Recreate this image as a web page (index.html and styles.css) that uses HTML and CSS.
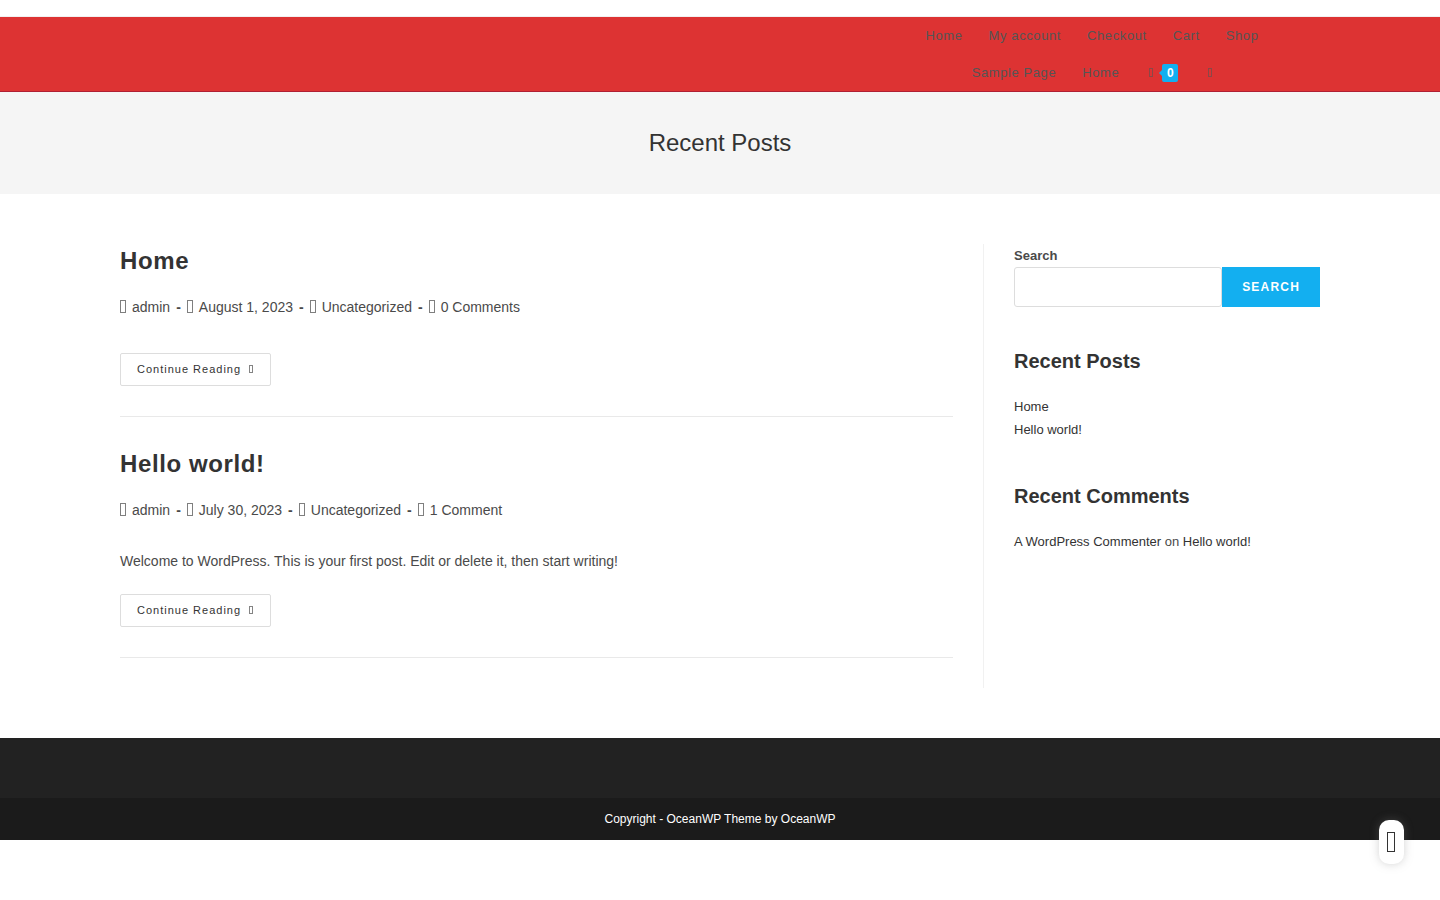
FILE: index.html
```html
<!DOCTYPE html>
<html lang="en">
<head>
<meta charset="utf-8">
<meta name="viewport" content="width=device-width, initial-scale=1">
<title>Recent Posts</title>
<link rel="stylesheet" href="styles.css">
</head>
<body>
<div class="top-bar"></div>
<header class="site-header">
  <div class="container header-inner">
    <nav class="main-nav" aria-label="Main">
      <ul class="menu">
        <li><a href="#">Home</a></li>
        <li><a href="#">My account</a></li>
        <li><a href="#">Checkout</a></li>
        <li><a href="#">Cart</a></li>
        <li><a href="#">Shop</a></li>
        <li><a href="#">Sample Page</a></li>
        <li><a href="#">Home</a></li>
        <li><a class="icon-link" href="#" aria-label="Cart items"><svg class="icon-nav" viewBox="0 0 4 9"><rect x=".5" y=".5" width="3" height="8"/></svg><span class="badge">0</span></a></li>
        <li><a class="icon-link" href="#" aria-label="Search website"><svg class="icon-nav" viewBox="0 0 4 9"><rect x=".5" y=".5" width="3" height="8"/></svg></a></li>
      </ul>
    </nav>
  </div>
</header>
<div class="page-header"><h1>Recent Posts</h1></div>
<div class="container content">
  <main class="primary">
    <article class="post">
      <h2><a href="#">Home</a></h2>
      <ul class="meta">
        <li><svg class="icon-meta" viewBox="0 0 6 13"><rect x=".5" y=".5" width="5" height="12"/></svg><a href="#">admin</a></li>
        <li><svg class="icon-meta" viewBox="0 0 6 13"><rect x=".5" y=".5" width="5" height="12"/></svg>August 1, 2023</li>
        <li><svg class="icon-meta" viewBox="0 0 6 13"><rect x=".5" y=".5" width="5" height="12"/></svg><a href="#">Uncategorized</a></li>
        <li><svg class="icon-meta" viewBox="0 0 6 13"><rect x=".5" y=".5" width="5" height="12"/></svg><a href="#">0 Comments</a></li>
      </ul>
      <a class="read-more" href="#">Continue Reading<svg class="icon-more" viewBox="0 0 4 8"><rect x=".5" y=".5" width="3" height="7"/></svg></a>
    </article>
    <article class="post">
      <h2><a href="#">Hello world!</a></h2>
      <ul class="meta">
        <li><svg class="icon-meta" viewBox="0 0 6 13"><rect x=".5" y=".5" width="5" height="12"/></svg><a href="#">admin</a></li>
        <li><svg class="icon-meta" viewBox="0 0 6 13"><rect x=".5" y=".5" width="5" height="12"/></svg>July 30, 2023</li>
        <li><svg class="icon-meta" viewBox="0 0 6 13"><rect x=".5" y=".5" width="5" height="12"/></svg><a href="#">Uncategorized</a></li>
        <li><svg class="icon-meta" viewBox="0 0 6 13"><rect x=".5" y=".5" width="5" height="12"/></svg><a href="#">1 Comment</a></li>
      </ul>
      <p class="excerpt">Welcome to WordPress. This is your first post. Edit or delete it, then start writing!</p>
      <a class="read-more" href="#">Continue Reading<svg class="icon-more" viewBox="0 0 4 8"><rect x=".5" y=".5" width="3" height="7"/></svg></a>
    </article>
  </main>
  <aside class="sidebar">
    <form class="widget search-form">
      <label for="search">Search</label>
      <div class="search-row">
        <input id="search" type="search">
        <button type="button">SEARCH</button>
      </div>
    </form>
    <section class="widget">
      <h2>Recent Posts</h2>
      <ul>
        <li><a href="#">Home</a></li>
        <li><a href="#">Hello world!</a></li>
      </ul>
    </section>
    <section class="widget">
      <h2>Recent Comments</h2>
      <ul>
        <li><a href="#">A WordPress Commenter</a> on <a href="#">Hello world!</a></li>
      </ul>
    </section>
  </aside>
</div>
<footer>
  <div class="footer-widgets"></div>
  <div class="copyright">Copyright - OceanWP Theme by OceanWP</div>
</footer>
<button class="float-button" type="button" aria-label="Open panel"><svg viewBox="0 0 8 20"><rect x=".5" y=".5" width="7" height="19"/></svg></button>
</body>
</html>
```
FILE: styles.css
```css
* { box-sizing: border-box; }
body {
  margin: 0;
  background: #fff;
  color: #4a4a4a;
  font: 14px/26px "Liberation Sans", Arial, sans-serif;
}
h1, h2, p, ul { margin: 0; padding: 0; }
ul { list-style: none; }
a { color: inherit; text-decoration: none; }
svg { fill: none; stroke: currentColor; flex: none; }
.container { width: 1200px; max-width: 90%; margin: 0 auto; }

.top-bar { height: 17px; border-bottom: 1px solid #f1f1f1; }
.site-header { background: #dd3333; border-bottom: 1px solid #b01f33; }
.header-inner { display: flex; justify-content: flex-end; }
.main-nav { width: 38%; }
.menu { display: flex; flex-wrap: wrap; justify-content: center; }
.menu a {
  display: flex;
  align-items: center;
  height: 37px;
  padding: 0 13px;
  color: #555;
  font-size: 13px;
  letter-spacing: 0.046em;
}
.icon-nav { width: 4px; height: 9px; opacity: 0.6; }
.menu .icon-link { padding-left: 17px; }
.badge {
  position: relative;
  width: 16px;
  margin-left: 9px;
  border-radius: 2px;
  background: #13aff0;
  color: #fff;
  font-size: 12px;
  font-weight: bold;
  line-height: 18px;
  letter-spacing: 0;
  text-align: center;
}
.badge::before {
  content: "";
  position: absolute;
  left: -3px;
  top: 6px;
  border: solid transparent;
  border-width: 3px 3px 3px 0;
  border-right-color: #13aff0;
}

.page-header { padding: 34px 0; background: #f5f5f5; text-align: center; }
.page-header h1 { color: #333; font-size: 24px; font-weight: normal; line-height: 34px; }

.content { display: flex; padding: 50px 0; }
.primary { width: 72%; padding-right: 30px; border-right: 1px solid #f1f1f1; }
.post { margin-bottom: 30px; padding-bottom: 30px; border-bottom: 1px solid #e9e9e9; }
.post h2 {
  margin-bottom: 16px;
  color: #333;
  font-size: 24px;
  line-height: 34px;
  letter-spacing: 0.025em;
}
.meta { display: flex; flex-wrap: wrap; margin-bottom: 33px; }
.meta li { display: flex; align-items: center; }
.meta li + li::before { content: "-"; margin: 0 6px; font-weight: bold; }
.icon-meta { width: 6px; height: 13px; margin: 0 6px 2px 0; opacity: 0.7; }
.excerpt { margin: -8px 0 20px; }
.read-more {
  display: inline-flex;
  align-items: center;
  height: 33px;
  padding: 0 17px 2px 16px;
  border: 1px solid #ddd;
  border-radius: 2px;
  color: #333;
  font-size: 11px;
  line-height: 20px;
  letter-spacing: 1px;
  vertical-align: top;
}
.icon-more { width: 4px; height: 8px; margin-left: 8px; opacity: 0.6; }

.sidebar { flex: 1; padding-left: 30px; font-size: 13px; line-height: 23px; }
.widget { margin-bottom: 40px; }
.widget h2 { margin-bottom: 20px; color: #333; font-size: 20px; line-height: 28px; }
.widget li:nth-child(2) { padding-bottom: 1px; }
.widget a { color: #333; }
.widget label { display: block; font-weight: bold; }
.search-row { display: flex; }
.search-row input {
  flex: 1;
  min-width: 0;
  height: 40px;
  padding: 6px 12px;
  border: 1px solid #ddd;
  border-radius: 3px;
  background: #fff;
  font: inherit;
}
.search-row button {
  padding: 0 20px;
  border: 0;
  background: #13aff0;
  color: #fff;
  font: bold 12px "Liberation Sans", Arial, sans-serif;
  letter-spacing: 0.1em;
}

.footer-widgets { height: 60px; background: #222; }
.copyright {
  padding: 10px 0;
  background: #1b1b1b;
  color: #fff;
  font-size: 12px;
  line-height: 22px;
  text-align: center;
}
.float-button {
  position: fixed;
  right: 36px;
  bottom: 36px;
  display: flex;
  padding: 12px 9px 12px 8px;
  border: 0;
  border-radius: 10px;
  background: #fff;
  box-shadow: 0 0 10px rgba(130, 130, 130, 0.35);
  color: #333;
}
.float-button svg { width: 8px; height: 20px; }
```
